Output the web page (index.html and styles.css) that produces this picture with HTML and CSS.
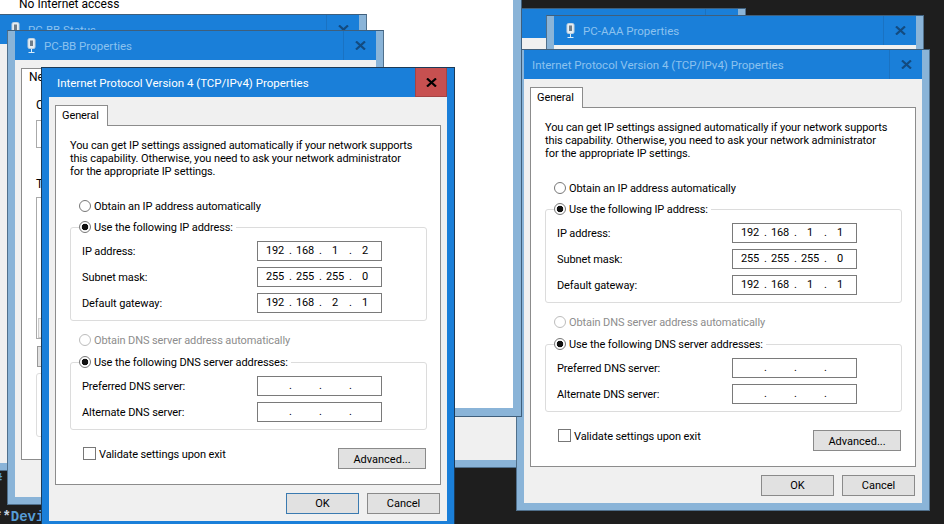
FILE: index.html
```html
<!DOCTYPE html>
<html lang="en">
<head>
    <meta charset="UTF-8">
    <meta name="viewport" content="width=device-width, initial-scale=1.0">
    <title>IPv4 Properties</title>
    <link rel="stylesheet" href="styles.css">
</head>
<body>

<svg class="defs" width="0" height="0">
    <symbol id="net" viewBox="0 0 9 16">
        <rect x="1" y="0.5" width="7" height="10" rx="1.5" fill="#e6edf2" stroke="#c4d3de"/>
        <rect x="3" y="2.5" width="3" height="5.5" fill="#6f7d89"/>
        <path d="M4.5 11v3.5M1.5 14.5h6" stroke="#d8ecfa" fill="none"/>
    </symbol>
    <symbol id="cross" viewBox="0 0 11 9">
        <path d="M1 0.5l9 8M10 0.5l-9 8" stroke="currentColor" stroke-width="2.2" fill="none"/>
    </symbol>
</svg>

<pre class="editor"><span class="hash">#</span>

<span class="star">**</span><span class="hash">Device settings</span></pre>

<div class="lower-window"><div class="lower-panel"></div></div>

<!-- windows behind the white one, right side -->
<div class="window status-right">
    <div class="titlebar">
        <span class="title">PC-AAA Status</span>
        <span class="close"><svg class="cross"><use href="#cross"/></svg></span>
    </div>
    <div class="win-body"></div>
</div>

<div class="window props-right">
    <div class="titlebar">
        <svg class="net-icon"><use href="#net"/></svg>
        <span class="title">PC-AAA Properties</span>
        <span class="close"><svg class="cross"><use href="#cross"/></svg></span>
    </div>
    <div class="win-body"></div>
</div>

<div class="dialog dialog-right">
    <div class="titlebar">
        <span class="title">Internet Protocol Version 4 (TCP/IPv4) Properties</span>
        <span class="close"><svg class="cross"><use href="#cross"/></svg></span>
    </div>
    <div class="dialog-body">
        <div class="tab">General</div>
        <div class="panel">
            <p class="intro">You can get IP settings assigned automatically if your network supports<br>this capability. Otherwise, you need to ask your network administrator<br>for the appropriate IP settings.</p>
            <div class="radio-row first"><span class="radio"></span>Obtain an IP address automatically</div>
            <div class="group">
                <div class="legend"><span class="radio on"></span>Use the following IP address:</div>
                <div class="field"><span class="field-label">IP address:</span>
                    <div class="ip"><span>192</span><i>.</i><span>168</span><i>.</i><span>1</span><i>.</i><span>1</span></div>
                </div>
                <div class="field"><span class="field-label">Subnet mask:</span>
                    <div class="ip"><span>255</span><i>.</i><span>255</span><i>.</i><span>255</span><i>.</i><span>0</span></div>
                </div>
                <div class="field"><span class="field-label">Default gateway:</span>
                    <div class="ip"><span>192</span><i>.</i><span>168</span><i>.</i><span>1</span><i>.</i><span>1</span></div>
                </div>
            </div>
            <div class="radio-row disabled"><span class="radio"></span>Obtain DNS server address automatically</div>
            <div class="group dns">
                <div class="legend"><span class="radio on"></span>Use the following DNS server addresses:</div>
                <div class="field"><span class="field-label">Preferred DNS server:</span>
                    <div class="ip"><span></span><i>.</i><span></span><i>.</i><span></span><i>.</i><span></span></div>
                </div>
                <div class="field"><span class="field-label">Alternate DNS server:</span>
                    <div class="ip"><span></span><i>.</i><span></span><i>.</i><span></span><i>.</i><span></span></div>
                </div>
            </div>
            <div class="panel-foot">
                <div class="check-row"><span class="check"></span>Validate settings upon exit</div>
                <button class="btn">Advanced...</button>
            </div>
        </div>
        <div class="dialog-buttons">
            <button class="btn">OK</button>
            <button class="btn">Cancel</button>
        </div>
    </div>
</div>

<!-- big white window, sits over the right dialog's left edge -->
<div class="white-window">No Internet access</div>

<!-- left stack -->
<div class="window status-left">
    <div class="titlebar">
        <svg class="net-icon"><use href="#net"/></svg>
        <span class="title">PC-BB Status</span>
        <span class="close"><svg class="cross"><use href="#cross"/></svg></span>
    </div>
    <div class="win-body"></div>
</div>

<div class="window props-left">
    <div class="titlebar">
        <svg class="net-icon"><use href="#net"/></svg>
        <span class="title">PC-BB Properties</span>
        <span class="close"><svg class="cross"><use href="#cross"/></svg></span>
    </div>
    <div class="win-body">
        <div class="net-tab">Networking</div>
        <div class="net-panel">
            <div class="net-label">Connect using:</div>
            <div class="net-box adapter"></div>
            <div class="net-label uses">This connection uses the following items:</div>
            <div class="net-box items"><div class="scroll"></div></div>
            <div class="net-btn"></div>
            <div class="net-box descr"></div>
        </div>
    </div>
</div>

<div class="dialog dialog-left active">
    <div class="titlebar">
        <span class="title">Internet Protocol Version 4 (TCP/IPv4) Properties</span>
        <span class="close"><svg class="cross"><use href="#cross"/></svg></span>
    </div>
    <div class="dialog-body">
        <div class="tab">General</div>
        <div class="panel">
            <p class="intro">You can get IP settings assigned automatically if your network supports<br>this capability. Otherwise, you need to ask your network administrator<br>for the appropriate IP settings.</p>
            <div class="radio-row first"><span class="radio"></span>Obtain an IP address automatically</div>
            <div class="group">
                <div class="legend"><span class="radio on"></span>Use the following IP address:</div>
                <div class="field"><span class="field-label">IP address:</span>
                    <div class="ip"><span>192</span><i>.</i><span>168</span><i>.</i><span>1</span><i>.</i><span>2</span></div>
                </div>
                <div class="field"><span class="field-label">Subnet mask:</span>
                    <div class="ip"><span>255</span><i>.</i><span>255</span><i>.</i><span>255</span><i>.</i><span>0</span></div>
                </div>
                <div class="field"><span class="field-label">Default gateway:</span>
                    <div class="ip"><span>192</span><i>.</i><span>168</span><i>.</i><span>2</span><i>.</i><span>1</span></div>
                </div>
            </div>
            <div class="radio-row disabled"><span class="radio"></span>Obtain DNS server address automatically</div>
            <div class="group dns">
                <div class="legend"><span class="radio on"></span>Use the following DNS server addresses:</div>
                <div class="field"><span class="field-label">Preferred DNS server:</span>
                    <div class="ip"><span></span><i>.</i><span></span><i>.</i><span></span><i>.</i><span></span></div>
                </div>
                <div class="field"><span class="field-label">Alternate DNS server:</span>
                    <div class="ip"><span></span><i>.</i><span></span><i>.</i><span></span><i>.</i><span></span></div>
                </div>
            </div>
            <div class="panel-foot">
                <div class="check-row"><span class="check"></span>Validate settings upon exit</div>
                <button class="btn">Advanced...</button>
            </div>
        </div>
        <div class="dialog-buttons">
            <button class="btn default">OK</button>
            <button class="btn">Cancel</button>
        </div>
    </div>
</div>

</body>
</html>
```

FILE: styles.css
```css
* {
    box-sizing: border-box;
}
html, body {
    height: 100%;
}
body {
    margin: 0;
    overflow: hidden;
    position: relative;
    background-color: #1e1e1e;
    font-family: Roboto, "Noto Sans", sans-serif;
    font-size: 11px;
    letter-spacing: -0.1px;
    color: #000;
}
.defs {
    position: absolute;
}

/* code editor behind everything */
.editor {
    margin: 0 0 0 -6px;
    padding-top: 470px;
    font-family: "Liberation Mono", monospace;
    font-size: 14px;
    line-height: 19px;
    letter-spacing: 0;
    font-weight: bold;
}
.hash {
    color: #569cd6;
}
.star {
    color: #c5d3e0;
}

/* generic window chrome */
.window, .dialog {
    position: absolute;
    display: flex;
    flex-direction: column;
    background-color: #8ab4d8;
    border: 1px solid #50708c;
    border-top-color: #3f5f7c;
    padding: 0 7px 7px;
}
.titlebar {
    display: flex;
    align-items: center;
    flex: none;
    height: 29px;
    background-color: #1a7fd9;
    color: #8cc2ef;
    font-size: 11.5px;
    letter-spacing: 0;
}
.net-icon {
    width: 9px;
    height: 16px;
    margin-left: 12px;
    margin-right: 8px;
}
.title {
    white-space: nowrap;
}
.close {
    display: flex;
    align-items: center;
    justify-content: center;
    width: 33px;
    height: 100%;
    margin-left: auto;
    border-left: 1px solid #1a72c2;
    color: #134b80;
}
.cross {
    width: 11px;
    height: 9px;
}
.win-body {
    flex: 1;
    background-color: #f0f0f0;
}

.status-left {
    left: -9px;
    top: 14px;
    width: 376px;
    height: 457px;
}
.props-left {
    left: 7px;
    top: 30px;
    width: 377px;
    height: 475px;
}
.status-right {
    left: 369px;
    top: 8px;
    width: 377px;
    height: 460px;
}
.props-right {
    left: 546px;
    top: 15px;
    width: 378px;
    height: 474px;
}

/* behind the left stack */
.net-tab {
    width: 60px;
    height: 21px;
    margin: 8px 0 0 6px;
    padding: 1px 0 0 7px;
    background-color: #fff;
    border: 1px solid #8c8c8c;
    border-bottom: 0;
    white-space: nowrap;
    overflow: hidden;
    font-size: 12px;
}
.net-panel {
    width: 346px;
    height: 371px;
    margin-left: 6px;
    padding: 9px 14px 0;
    background-color: #fff;
    border: 1px solid #8c8c8c;
    border-top: 0;
}
.net-label {
    height: 22px;
    white-space: nowrap;
    font-size: 12px;
}
.net-label.uses {
    margin-top: 30px;
    height: 19px;
    line-height: 13px;
}
.net-box {
    border: 1px solid #aaa;
    width: 300px;
}
.adapter {
    height: 28px;
}
.items {
    height: 142px;
    padding: 120px 0 0 1px;
}
.scroll {
    width: 40px;
    height: 20px;
    background-color: #f0f0f0;
    border: 1px solid #ccc;
}
.net-btn {
    width: 60px;
    height: 21px;
    margin: 7px 0 0 1px;
    background-color: #e1e1e1;
    border: 1px solid #999;
}
.descr {
    height: 64px;
    margin-top: 6px;
    border-color: #ddd;
    border-radius: 3px;
}

/* white window and what peeks out beneath it */
.white-window {
    position: absolute;
    left: -10px;
    top: -10px;
    width: 531px;
    height: 426px;
    padding: 6px 0 0 29px;
    background-color: #fff;
    border-right: 8px solid #8ab4d8;
    border-bottom: 8px solid #8ab4d8;
    box-shadow: 1px 1px 0 #3f5f7c;
    font-size: 12px;
    line-height: 16px;
    letter-spacing: 0;
}
.lower-window {
    position: absolute;
    left: 100px;
    top: 300px;
    width: 440px;
    height: 164px;
    padding: 0 0 7px;
    background-color: #8ab4d8;
}
.lower-panel {
    height: 100%;
    background-color: #f0f0f0;
    background-image: linear-gradient(#8c8c8c, #8c8c8c);
    background-repeat: no-repeat;
    background-size: 100% 1px;
    background-position: 0 120px;
}

/* the IPv4 dialog */
.dialog {
    width: 414px;
    height: 462px;
}
.dialog-left {
    left: 41px;
    top: 67px;
}
.dialog-right {
    left: 516px;
    top: 49px;
}
.dialog .title {
    margin-left: 8px;
}
.active {
    background-color: #1a7fd9;
    border-color: #1c3a57;
}
.active .titlebar {
    color: #fff;
}
.active .close {
    width: 32px;
    background-color: #c75050;
    border: 1px solid #a34444;
    border-top: 0;
    color: #000;
}
.dialog-body {
    flex: 1;
    padding: 8px 6px 0;
    background-color: #f0f0f0;
}
.tab {
    position: relative;
    z-index: 1;
    width: 53px;
    height: 21px;
    padding: 2px 0 0 6px;
    background-color: #fff;
    border: 1px solid #8c8c8c;
    border-bottom: 0;
    line-height: 16px;
}
.panel {
    height: 360px;
    margin-top: -1px;
    padding: 13px 13px 0 14px;
    background-color: #fff;
    border: 1px solid #8c8c8c;
}
.intro {
    margin: 0;
    line-height: 13px;
    white-space: nowrap;
}
.radio-row, .legend {
    display: flex;
    align-items: center;
    height: 16px;
    white-space: nowrap;
}
.radio-row {
    margin-top: 11px;
    padding-left: 9px;
}
.radio-row.first {
    margin-top: 20px;
}
.disabled {
    color: #8d8d8d;
}
.disabled .radio {
    border-color: #bcbcbc;
}
.radio {
    flex: none;
    width: 12px;
    height: 12px;
    margin-right: 3px;
    border: 1px solid #777;
    border-radius: 50%;
    background-color: #fff;
}
.radio.on {
    background: radial-gradient(circle, #111 0 3px, #fff 3.6px);
}
.group {
    height: 94px;
    margin-top: 13px;
    padding: 0 11px;
    border: 1px solid #dcdcdc;
    border-radius: 3px;
}
.group.dns {
    height: 68px;
    margin-top: 14px;
}
.legend {
    width: fit-content;
    margin: -9px 0 6px -3px;
    padding: 0 3px 0 0;
    background-color: #fff;
}
.field {
    display: flex;
    align-items: center;
    margin-bottom: 6px;
}
.field-label {
    width: 175px;
    white-space: nowrap;
}
.ip {
    display: flex;
    width: 125px;
    height: 20px;
    padding-left: 4px;
    border: 1px solid #7a7a7a;
    line-height: 18px;
    background-color: #fff;
}
.ip span {
    width: 26px;
    text-align: center;
}
.ip i {
    width: 4px;
    padding-left: 1px;
    font-style: normal;
}
.panel-foot {
    display: flex;
    justify-content: space-between;
    align-items: flex-start;
    margin-top: 18px;
    padding: 0 1px 0 13px;
}
.panel-foot .btn {
    padding-top: 2px;
}
.check-row {
    display: flex;
    align-items: flex-start;
    height: 13px;
    margin-top: -1px;
    line-height: 15px;
    white-space: nowrap;
}
.check {
    width: 13px;
    height: 13px;
    margin-right: 3px;
    border: 1px solid #777;
    background-color: #fff;
}
.btn {
    width: 88px;
    height: 21px;
    padding: 0;
    font-family: inherit;
    font-size: 11px;
    color: #000;
    background-color: #e1e1e1;
    border: 1px solid #8a8a8a;
}
.dialog-buttons {
    display: flex;
    justify-content: flex-end;
    gap: 8px;
    margin-top: 8px;
    padding-right: 1px;
}
.dialog-buttons .btn {
    width: 73px;
}
.btn.default {
    border-color: #3a7ab0;
}
```
